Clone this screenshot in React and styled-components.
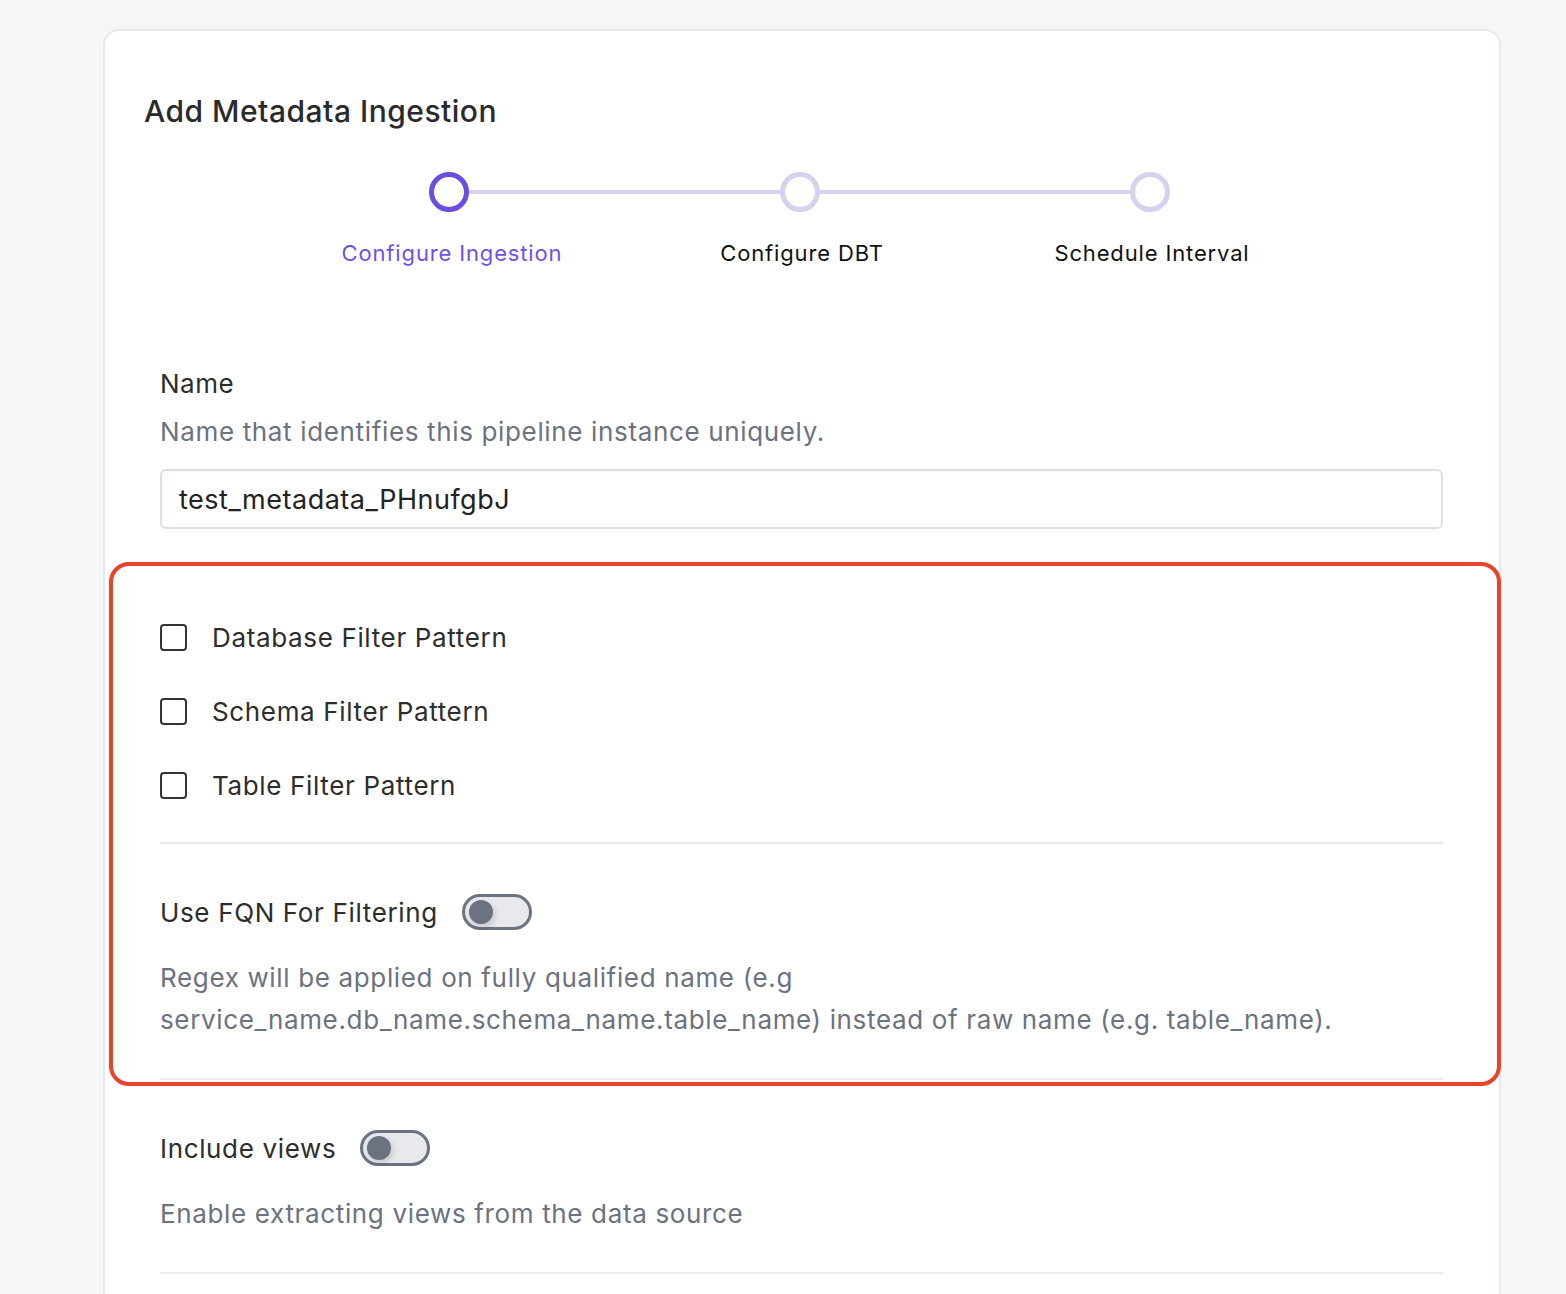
import React from "react";
import styled, {createGlobalStyle} from "styled-components";

const GlobalStyle = createGlobalStyle`
  html, body {
    margin: 0;
    padding: 0;
    background: #f5f6f8;
    font-family: "Inter", "Noto Sans", sans-serif;
  }
  * {
    box-sizing: border-box;
  }
`

const Page = styled.div`
  height: 1294px;
  padding: 29px 65px 0 103px;
  overflow: hidden;
`

const Card = styled.div`
  position: relative;
  width: 1398px;
  min-height: 1300px;
  background: #ffffff;
  border: 2px solid #e6e8eb;
  border-radius: 16px;
  padding: 62px 56px 0 39px;
`

const Title = styled.h1`
  margin: 0;
  font-size: 30px;
  line-height: 36px;
  font-weight: 500;
  letter-spacing: 0.5px;
  color: #2a2a2a;
`

const Track = styled.div`
  display: flex;
  align-items: center;
  margin: 43px 0 0 285px;
  width: 741px;
`

const Dot = styled.div`
  width: 40px;
  height: 40px;
  flex: none;
  border-radius: 50%;
  background: #ffffff;
  border: 5px solid ${p => p.active ? '#6b4ee0' : '#d8d0ee'};
`

const Connector = styled.div`
  flex: 1;
  height: 4px;
  background: #d8d0ee;
`

const StepLabels = styled.div`
  display: grid;
  grid-template-columns: repeat(3, 350px);
  margin: 26px 0 0 133px;
`

const StepLabel = styled.div`
  text-align: center;
  font-size: 22px;
  line-height: 30px;
  letter-spacing: 0.85px;
  color: ${p => p.active ? '#7150e6' : '#111111'};
`

const Form = styled.div`
  display: flex;
  flex-direction: column;
  margin: 100px 0 0 16px;
`

const Label = styled.div`
  font-size: 26px;
  line-height: 32px;
  letter-spacing: 0.5px;
  color: #2d2d2d;
`

const Hint = styled.div`
  margin-top: ${p => p.gap || 16}px;
  font-size: 26px;
  line-height: ${p => p.lh || 32}px;
  letter-spacing: 0.65px;
  color: #6b7280;
`

const Input = styled.div`
  margin-top: 21px;
  height: 60px;
  border: 2px solid #dcdfe5;
  border-radius: 6px;
  padding: 0 17px;
  display: flex;
  align-items: center;
  font-size: 27px;
  letter-spacing: 0.5px;
  color: #222222;
`

const FilterSection = styled.div`
  position: relative;
  padding-top: 88px;
  display: flex;
  flex-direction: column;
`

const Highlight = styled.div`
  position: absolute;
  top: 33px;
  left: -51px;
  right: -58px;
  bottom: -6px;
  border: 4px solid #e8432b;
  border-radius: 20px;
  pointer-events: none;
`

const CheckList = styled.div`
  display: flex;
  flex-direction: column;
  gap: 34px;
`

const CheckRow = styled.label`
  display: flex;
  align-items: center;
  height: 40px;
  gap: 25px;
  font-size: 26px;
  letter-spacing: 0.65px;
  color: #2d2d2d;
`

const Box = styled.span`
  width: 27px;
  height: 27px;
  border: 2px solid #333333;
  border-radius: 4px;
  flex: none;
`

const Divider = styled.div`
  height: 2px;
  background: #e9eaee;
  margin-top: 37px;
`

const SwitchRow = styled.div`
  display: flex;
  align-items: center;
  height: 40px;
  gap: 24px;
  margin-top: 48px;
  font-size: 26px;
  letter-spacing: 0.65px;
  color: #2d2d2d;
`

const Switch = styled.span`
  position: relative;
  width: 70px;
  height: 36px;
  border: 3px solid #6b7280;
  border-radius: 20px;
  background: #e8e9ec;
  flex: none;

  &::after {
    content: "";
    position: absolute;
    top: 3px;
    left: 4px;
    width: 24px;
    height: 24px;
    border-radius: 50%;
    background: #6b7280;
    box-shadow: 2px 3px 6px rgba(0, 0, 0, 0.15);
  }
`

const steps = ['Configure Ingestion', 'Configure DBT', 'Schedule Interval']
const filters = ['Database Filter Pattern', 'Schema Filter Pattern', 'Table Filter Pattern']

export default function App() {
  return <>
    <GlobalStyle/>
    <Page>
      <Card>
        <Title>Add Metadata Ingestion</Title>
        <Track>
          <Dot active/>
          <Connector/>
          <Dot/>
          <Connector/>
          <Dot/>
        </Track>
        <StepLabels>
          {steps.map((s, i) => <StepLabel key={s} active={i === 0}>{s}</StepLabel>)}
        </StepLabels>
        <Form>
          <Label>Name</Label>
          <Hint>Name that identifies this pipeline instance uniquely.</Hint>
          <Input>test_metadata_PHnufgbJ</Input>
          <FilterSection>
            <Highlight/>
            <CheckList>
              {filters.map(f => <CheckRow key={f}><Box/>{f}</CheckRow>)}
            </CheckList>
            <Divider/>
            <SwitchRow>Use FQN For Filtering<Switch/></SwitchRow>
            <Hint gap={25} lh={42}>
              Regex will be applied on fully qualified name (e.g service_name.db_name.schema_name.table_name) instead of raw name (e.g. table_name).
            </Hint>
            <Divider/>
          </FilterSection>
          <SwitchRow>Include views<Switch/></SwitchRow>
          <Hint gap={25} lh={42}>Enable extracting views from the data source</Hint>
          <Divider/>
        </Form>
      </Card>
    </Page>
  </>
}
